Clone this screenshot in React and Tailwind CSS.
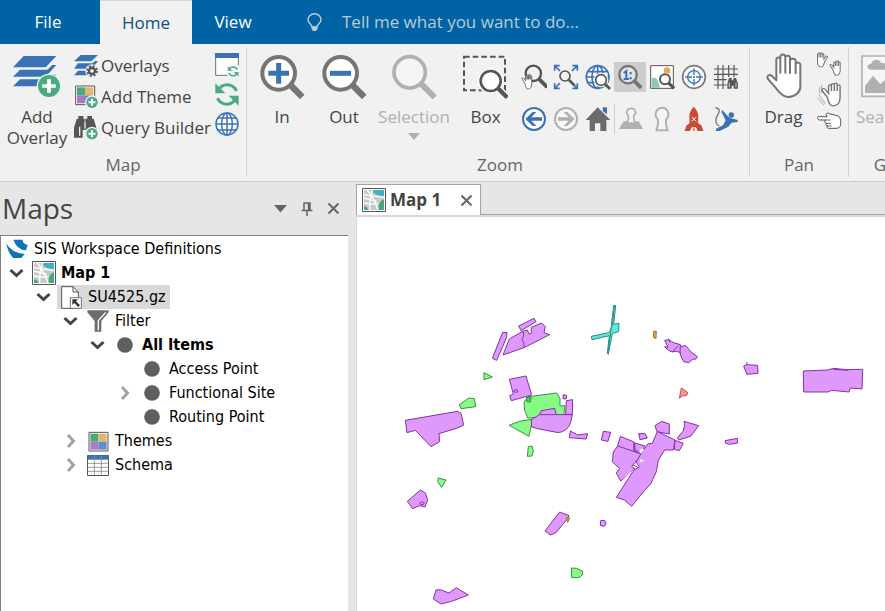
import React from "react";

const BLUE = "#3a73b4";
const GREEN = "#4bab80";
const DARK = "#555555";
const GREY = "#757575";
const PALE = "#b0b0b0";

function Pic({ box, children }) {
  const [x, y, w, h] = box;
  return (
    <svg aria-hidden="true" className="block shrink-0" width={Math.round(w / 3)} height={Math.round(h / 3)} viewBox={`${x} ${y} ${w} ${h}`}>
      {children}
    </svg>
  );
}

function PlusBadge({ x, y, r }) {
  return (
    <g>
      <circle cx={x} cy={y} r={r + 4} fill="#f1f1f1" />
      <circle cx={x} cy={y} r={r} fill={GREEN} />
      <path d={`M${x - r * 0.62} ${y}h${r * 1.24}M${x} ${y - r * 0.62}v${r * 1.24}`} stroke="#fff" strokeWidth={r * 0.34} />
    </g>
  );
}

function Lens({ x, y, r, w, len, color = DARK, fill = "#fff" }) {
  const a = x + r * 0.75;
  const b = y + r * 0.75;
  return (
    <g>
      <path d={`M${a} ${b}l${len} ${len}`} stroke={color} strokeWidth={w * 1.6} />
      <circle cx={x} cy={y} r={r} fill={fill} stroke={color} strokeWidth={w} />
    </g>
  );
}

const ADD_OVERLAY = (
  <Pic box={[42, 171, 144, 129]}>
    <g fill={BLUE}>
      <path d="M74 174H172L140 208H42Z" />
      <path d="M63 215H145L160 201H172L140 236H42Z" />
      <path d="M63 244H145L160 230H172L140 265H42Z" />
    </g>
    <PlusBadge x={150} y={264} r={33} />
  </Pic>
);

const OVERLAYS = (
  <Pic box={[222, 159, 75, 72]}>
    <g fill={BLUE}>
      <path d="M242 162H294L274 181H222Z" />
      <path d="M234 187H277L285 180H294L276 203H222Z" />
      <path d="M234 209H270L262 223H222Z" />
    </g>
    <circle cx="276" cy="210" r="20" fill="#f1f1f1" />
    <circle cx="276" cy="210" r="14" fill="none" stroke={DARK} strokeWidth="7" strokeDasharray="6 5" />
    <circle cx="276" cy="210" r="9" fill="#fff" stroke={DARK} strokeWidth="7" />
  </Pic>
);

const THEME_TILES = (
  <g>
    <path d="M227 254H284V310H227Z" fill="#fff" stroke={DARK} strokeWidth="3" />
    <path d="M231 258H255V282H231Z" fill="#46aa7d" />
    <path d="M255 258H280V282H255Z" fill="#e9b463" />
    <path d="M231 282H255V306H231Z" fill="#a87cc0" />
    <path d="M255 282H280V306H255Z" fill="#5f8cca" />
  </g>
);

const ADD_THEME = (
  <Pic box={[222, 251, 75, 72]}>
    {THEME_TILES}
    <PlusBadge x={276} y={303} r={17} />
  </Pic>
);

const QUERY = (
  <Pic box={[222, 340, 75, 75]}>
    <g fill={DARK}>
      <path d="M235 343H250V351H254V384H248V408H222V378L230 352H235Z" />
      <path d="M262 343H276V351H281L289 378V408H262V384H256V351H262Z" />
      <path d="M246 362H266V384H246Z" />
    </g>
    <path d="M239 375V402M255 362V381" stroke="#f1f1f1" strokeWidth="4" />
    <PlusBadge x={276} y={396} r={17} />
  </Pic>
);

function RefreshShape() {
  return (
    <g>
      <path d="M654 272C666 248 696 248 710 272" fill="none" stroke={GREEN} strokeWidth="9" />
      <path d="M708 294C696 318 666 318 652 294" fill="none" stroke={GREEN} strokeWidth="9" />
      <path d="M646 249V279H676Z" fill={GREEN} />
      <path d="M716 317V287H686Z" fill={GREEN} />
    </g>
  );
}

const WINDOW_REFRESH = (
  <Pic box={[645, 159, 72, 72]}>
    <path d="M647 161H715V226H647Z" fill="#fff" stroke={DARK} strokeWidth="2.5" />
    <path d="M645 159H717V174H645Z" fill={BLUE} />
    <path d="M682 196H717V230H682Z" fill="#f7f7f7" />
    <g transform="translate(386 84) scale(.46)">
      <RefreshShape />
    </g>
  </Pic>
);

const REFRESH = (
  <Pic box={[645, 246, 72, 74]}>
    <RefreshShape />
  </Pic>
);

const GLOBE = (
  <Pic box={[645, 336, 72, 72]}>
    <g fill="none" stroke={BLUE} strokeWidth="4.5">
      <circle cx="681" cy="372" r="33" fill="#fff" />
      <ellipse cx="681" cy="372" rx="16" ry="33" />
      <path d="M681 339V405M648 372H714M654 354H708M654 390H708" />
    </g>
  </Pic>
);

const ZOOM_IN = (
  <Pic box={[48, 42, 135, 135]}>
    <Lens x={104} y={100} r={49} w={12} len={34} color={GREY} />
    <path d="M73 100H135M104 69V131" stroke={BLUE} strokeWidth="15" />
  </Pic>
);

const ZOOM_OUT = (
  <Pic box={[234, 42, 135, 135]}>
    <Lens x={290} y={100} r={49} w={12} len={34} color={GREY} />
    <path d="M258 100H321" stroke={BLUE} strokeWidth="15" />
  </Pic>
);

const ZOOM_SELECTION = (
  <Pic box={[443, 42, 135, 135]}>
    <Lens x={496} y={97} r={47} w={11} len={40} color={PALE} fill="#f4f4f4" />
  </Pic>
);

const ZOOM_BOX = (
  <Pic box={[657, 48, 135, 135]}>
    <path d="M660 56H783V157H660Z" fill="none" stroke={DARK} strokeWidth="6" strokeDasharray="17 9" />
    <circle cx="740" cy="129" r="39" fill="#fafafa" />
    <path d="M762 151L790 179" stroke="#fafafa" strokeWidth="22" />
    <Lens x={740} y={129} r={30} w={8} len={27} />
  </Pic>
);

const HAND =
  "M10 24C7 20 4 15 3 13C2 10 5 9 7 11L12 18V6C12 3 16 3 16 6V14V4C16 1 20 1 20 4V14V3C20 0 24 0 24 3V14V6C24 3 28 3 28 6V25C28 35 24 39 18 39C13 39 12 32 10 24Z";

const ZOOM_GRID = [
  {
    name: "Zoom pan",
    icon: (
      <Pic box={[66, 57, 78, 78]}>
        <Lens x={103} y={85} r={23} w={7} len={24} fill="#f1f1f1" />
        <g transform="translate(66 87) scale(1.15)">
          <path d={HAND} fill="#fff" stroke={DARK} strokeWidth="2.2" />
        </g>
      </Pic>
    ),
  },
  {
    name: "Zoom extent",
    icon: (
      <Pic box={[159, 57, 78, 78]}>
        <g fill="none" stroke={BLUE} strokeWidth="5">
          <path d="M164 77V62H179M164 62L180 78M217 62H232V77M232 62L216 78M164 115V130H179M164 130L180 114M217 130H232V115M232 130L216 114" />
        </g>
        <Lens x={195} y={93} r={15} w={5} len={17} fill="#f4f4f4" />
      </Pic>
    ),
  },
  {
    name: "Zoom world",
    icon: (
      <Pic box={[255, 57, 78, 78]}>
        <g fill="none" stroke={BLUE} strokeWidth="5">
          <circle cx="293" cy="96" r="34" fill="#fff" />
          <ellipse cx="293" cy="96" rx="17" ry="34" />
          <path d="M293 62V130M259 96H327M264 80H322M264 113H322" />
        </g>
        <circle cx="303" cy="105" r="22" fill="#f1f1f1" />
        <Lens x={303} y={105} r={16} w={5} len={15} />
      </Pic>
    ),
  },
  {
    name: "Zoom scale",
    on: true,
    icon: (
      <Pic box={[351, 57, 78, 78]}>
        <Lens x={384} y={89} r={26} w={7} len={20} color={GREY} fill="#e4e4e4" />
        <g stroke={BLUE} strokeWidth="6" fill="none">
          <path d="M371 84L379 78V103M371 102H387" />
          <path d="M392 81V88M392 96V103" />
        </g>
      </Pic>
    ),
  },
  {
    name: "Zoom image",
    icon: (
      <Pic box={[447, 57, 78, 78]}>
        <path d="M452 62H520V130H452Z" fill="#fff" stroke={DARK} strokeWidth="3" />
        <circle cx="501" cy="77" r="10" fill="#e8a94a" />
        <path d="M455 100Q468 95 474 108L480 128H455Z" fill="#8cc9b0" />
        <circle cx="495" cy="103" r="20" fill="#fff" />
        <Lens x={495} y={103} r={15} w={6} len={16} />
      </Pic>
    ),
  },
  {
    name: "Zoom target",
    icon: (
      <Pic box={[543, 57, 78, 78]}>
        <circle cx="582" cy="96" r="34" fill="#fff" stroke="#777" strokeWidth="5" />
        <circle cx="582" cy="96" r="19" fill="none" stroke={BLUE} strokeWidth="4" />
        <path d="M582 70V90M582 102V122M556 96H576M588 96H608" stroke={BLUE} strokeWidth="4" />
        <circle cx="582" cy="96" r="3" fill={BLUE} />
      </Pic>
    ),
  },
  {
    name: "Find grid reference",
    icon: (
      <Pic box={[639, 57, 78, 78]}>
        <path d="M654 60V132M669 60V132M686 60V96M702 60V96M642 72H714M642 88H714M642 104H680M642 120H680" stroke={DARK} strokeWidth="3.5" />
        <path d="M682 131V116L687 99H695V106H700V99H708L714 116V131H701V122H695V131Z" fill={DARK} />
        <path d="M688 113V127M708 113V127" stroke="#f1f1f1" strokeWidth="2.5" />
      </Pic>
    ),
  },
  {
    name: "Previous view",
    icon: (
      <Pic box={[66, 183, 78, 78]}>
        <circle cx="105" cy="222" r="33" fill="#fff" stroke={BLUE} strokeWidth="6" />
        <path d="M79 222L101 201H112L97 217H129V227H97L112 243H101Z" fill={BLUE} />
      </Pic>
    ),
  },
  {
    name: "Next view",
    icon: (
      <Pic box={[159, 183, 78, 78]}>
        <circle cx="198" cy="222" r="33" fill="#f7f7f7" stroke={PALE} strokeWidth="6" />
        <path d="M224 222L202 201H191L206 217H174V227H206L191 243H202Z" fill={PALE} />
      </Pic>
    ),
  },
  {
    name: "Home view",
    icon: (
      <Pic box={[255, 183, 78, 78]}>
        <path d="M308 187H321V208L308 198Z" fill={BLUE} />
        <path d="M293 187L331 225H319V258H301V235H285V258H269V225H257Z" fill="#6b6b6b" />
      </Pic>
    ),
  },
  {
    name: "Place view",
    icon: (
      <Pic box={[363, 183, 78, 78]}>
        <path d="M380 229H425L438 252H366Z" fill={PALE} />
        <path d="M390 234Q396 220 394 212Q387 206 390 198Q395 189 402 190Q411 189 415 198Q418 206 410 212Q409 220 414 234Z" fill="#f5f5f5" stroke={PALE} strokeWidth="5" />
      </Pic>
    ),
  },
  {
    name: "View marker",
    icon: (
      <Pic box={[456, 183, 78, 78]}>
        <path d="M478 256Q486 236 482 222Q473 213 477 201Q483 188 495 188Q508 188 513 201Q517 213 508 222Q504 236 512 256Z" fill="#f5f5f5" stroke={PALE} strokeWidth="6" strokeLinejoin="round" />
      </Pic>
    ),
  },
  {
    name: "Launch",
    icon: (
      <Pic box={[552, 183, 78, 78]}>
        <path d="M590 185Q604 199 604 215L603 234L614 242L619 258H602L597 247H584L579 258H563L568 242L578 234L577 215Q577 199 590 185Z" fill="#cc4934" />
        <path d="M584 216L598 229M598 216L584 229" stroke="#fff" strokeWidth="3" />
        <path d="M588 250H593V258H588Z" fill="#e06b50" />
      </Pic>
    ),
  },
  {
    name: "Jump",
    icon: (
      <Pic box={[648, 183, 78, 78]}>
        <path d="M655 188C679 193 660 207 657 222Q654 237 667 243" fill="none" stroke="#777" strokeWidth="4" />
        <circle cx="703" cy="210" r="8" fill={BLUE} />
        <path d="M676 195L692 213L700 219L722 225V231L704 233L694 245L668 258H657V251L678 241L686 226L673 200Z" fill={BLUE} />
      </Pic>
    ),
  },
];

const DRAG = (
  <Pic box={[78, 39, 108, 138]}>
    <path
      d="M106 142L84 117C79 108 88 101 97 109L109 121V59C109 50 121 50 121 59V98V51C121 41 136 41 136 51V98V53C136 45 150 45 150 53V99V63C150 54 167 54 167 63V100V75C167 65 181 66 181 75V140C181 156 165 171 146 171C128 171 116 156 106 142Z"
      fill="#fff"
      stroke={GREY}
      strokeWidth="6"
      strokeLinejoin="round"
    />
  </Pic>
);

const PAN_ICONS = [
  {
    name: "Pan step",
    icon: (
      <Pic box={[231, 36, 75, 75]}>
        <g fill="#fff" stroke={GREY} strokeWidth="2.6">
          <path transform="translate(266 37) scale(-1.2 1.12)" d={HAND} />
          <path transform="translate(267 62) scale(1.2 1.12)" d={HAND} />
        </g>
      </Pic>
    ),
  },
  {
    name: "Pan glide",
    icon: (
      <Pic box={[231, 125, 75, 75]}>
        <path d="M236 162L256 190M233 172L252 194M239 140V160M245 134V158" stroke="#aaa" strokeWidth="3" />
        <path transform="translate(240 127) scale(2.15 1.78)" d={HAND} fill="#fff" stroke={GREY} strokeWidth="2" />
      </Pic>
    ),
  },
  {
    name: "Pan point",
    icon: (
      <Pic box={[231, 224, 75, 54]}>
        <path
          d="M233 244C230 240 233 238 237 238H262L258 232C258 227 264 226 268 229L291 235Q302 238 302 250V259Q302 273 288 273H266C259 273 259 266 265 266C256 266 255 258 261 258C252 258 252 249 258 248H237Z"
          fill="#fff"
          stroke={DARK}
          strokeWidth="3"
        />
        <path d="M258 248H272M261 258H273M265 266H275" stroke={DARK} strokeWidth="2.5" />
      </Pic>
    ),
  },
];

const SEARCH_IMAGE = (
  <Pic box={[363, 39, 135, 129]}>
    <path d="M366 42H492V163H366Z" fill="#f6f6f6" stroke={PALE} strokeWidth="5" />
    <path d="M392 83C378 81 380 65 393 66C398 50 419 49 424 64C435 60 446 70 442 83Z" fill={PALE} />
    <path d="M375 153V132L399 101L421 127L437 112V153Z" fill={PALE} />
  </Pic>
);

function MapThumb() {
  return (
    <Pic box={[96, 228, 72, 72]}>
      <path d="M97.500 229.500H166.500V298.500H97.500Z" fill="#fff" stroke={DARK} strokeWidth="3" />
      <path d="M102 234H162V294H102Z" fill="#c9c9c9" />
      <path d="M126 234H162V252Q134 252 126 234Z" fill="#3fb0c4" />
      <path d="M162 262V294H146Q143 268 162 262Z" fill="#46aa7d" />
      <path d="M102 282Q112 284 116 294H102Z" fill="#46aa7d" />
      <path d="M102 248Q126 252 162 256M112 234Q134 262 144 294M102 272Q122 280 146 274M119 294Q118 262 128 234M102 258L140 268" fill="none" stroke="#fff" strokeWidth="4" />
    </Pic>
  );
}

const TREE_ICONS = {
  logo: (
    <Pic box={[18, 162, 66, 60]}>
      <path d="M40 164H68Q67 176 83 180L78 196Q50 194 40 164Z" fill="#0d76b8" />
      <path d="M19 175Q32 203 74 207L64 219H40Q24 205 19 175Z" fill="#0d76b8" />
    </Pic>
  ),
  map: <MapThumb />,
  file: (
    <Pic box={[186, 303, 63, 69]}>
      <path d="M188 305H222L238 321V370H188Z" fill="#fff" stroke={DARK} strokeWidth="3" />
      <path d="M222 305V321H238" fill="none" stroke={DARK} strokeWidth="3" />
      <path d="M214 338H247V370H214Z" fill="#fff" stroke={GREY} strokeWidth="3" />
      <path d="M220 343H237L231 349L243 361L238 366L226 354L220 360Z" fill="#333" />
    </Pic>
  ),
  filter: (
    <Pic box={[261, 375, 66, 66]}>
      <path d="M262 376H326V382L304 408V440H284V408L262 382Z" fill="#6d6d6d" />
      <path d="M295 436V407L317 382" fill="none" stroke="#fff" strokeWidth="4" />
    </Pic>
  ),
  dot: (
    <Pic box={[0, 0, 48, 48]}>
      <circle cx="24" cy="24" r="23.500" fill="#5f5f5f" />
    </Pic>
  ),
  themes: (
    <Pic box={[224, 250, 63, 63]}>
      {THEME_TILES}
    </Pic>
  ),
  schema: (
    <Pic box={[261, 372, 66, 63]}>
      <path d="M262.500 373.500H325.500V433.500H262.500Z" fill="#fff" stroke={DARK} strokeWidth="3" />
      <path d="M262 373H326V386H262Z" fill={BLUE} />
      <path d="M283 374V433M304 374V433M262 397H326M262 409H326M262 421H326" stroke="#8a8a8a" strokeWidth="2.500" />
    </Pic>
  ),
};

const TREE = [
  { pad: "pl-[4px]", icon: "logo", label: "SIS Workspace Definitions" },
  { pad: "pl-[4px]", icon: "map", label: "Map 1", bold: true, arrow: "open" },
  { pad: "pl-[31px]", icon: "file", label: "SU4525.gz", arrow: "open", selected: true },
  { pad: "pl-[58px]", icon: "filter", label: "Filter", arrow: "open" },
  { pad: "pl-[85px]", icon: "dot", label: "All Items", bold: true, arrow: "open" },
  { pad: "pl-[112px]", icon: "dot", label: "Access Point", arrow: "none" },
  { pad: "pl-[112px]", icon: "dot", label: "Functional Site", arrow: "closed" },
  { pad: "pl-[112px]", icon: "dot", label: "Routing Point", arrow: "none" },
  { pad: "pl-[58px]", icon: "themes", label: "Themes", arrow: "closed" },
  { pad: "pl-[58px]", icon: "schema", label: "Schema", arrow: "closed" },
];

function TreeRow({ row }) {
  const open = row.arrow === "open";
  return (
    <li className={`flex h-6 items-center ${row.pad}`}>
      {row.arrow && (
        <span className="w-[27px] shrink-0 pl-1">
          {row.arrow !== "none" && (
            <button type="button" aria-label={`${open ? "Collapse" : "Expand"} ${row.label}`} className="block">
              <svg width="15" height="16" viewBox="0 0 15 16" fill="none" strokeWidth="3">
                {open ? <path d="M1.500 5L7.500 10.500L13.500 5" stroke="#444" /> : <path d="M5 2L10.500 8L5 14" stroke="#a3a3a3" />}
              </svg>
            </button>
          )}
        </span>
      )}
      <span className={`-ml-0.5 flex h-6 items-center gap-[5px] pr-1 pl-0.5 ${row.selected ? "bg-[#d9d9d9]" : ""}`}>
        <span className="flex w-6 justify-center">{TREE_ICONS[row.icon]}</span>
        <span className={row.bold ? "font-bold" : ""}>{row.label}</span>
      </span>
    </li>
  );
}

function Group({ title, className = "", children }) {
  return (
    <section aria-label={title} className={`flex shrink-0 flex-col ${className}`}>
      <div className="flex h-[106px] items-start">{children}</div>
      <h2 className="text-center text-[17px] leading-6 text-[#666]">{title}</h2>
    </section>
  );
}

function BigButton({ icon, width, disabled, children }) {
  return (
    <button type="button" disabled={disabled} className={`flex shrink-0 flex-col items-center gap-[5px] pt-1 ${width} ${disabled ? "text-[#b0b0b0]" : "text-[#444]"}`}>
      <span className="flex h-[50px] items-center">{icon}</span>
      <span className="leading-[21px]">{children}</span>
    </button>
  );
}

function MapShapes() {
  return (
    <svg role="img" aria-label="Map of functional sites" className="block shrink-0" width="528" height="394" viewBox="357 217 528 394">
      <g strokeWidth="3" strokeLinejoin="round" fill="#df99fc" stroke="#8232a4">
        <g transform="translate(390 290) scale(.33333)">
          <path d="M386 108L432 85L438 95L393 122Z" />
          <path d="M338 127L351 128L350 142L320 211L307 205Z" />
          <path d="M358 147L398 124L412 120L417 132L424 130L424 112L455 99L466 110L462 128L479 134L402 173L339 195Z" />
          <path d="M398 124Q406 135 396 148Q404 158 402 173" fill="none" />
          <path d="M358 268L408 258L425 315L364 332L359 317L370 312Z" />
          <ellipse cx="378" cy="303" rx="6" ry="4" />
          <path d="M46 391L203 364L213 370L221 405L205 413L147 431L149 455L123 470L76 421L51 428Z" />
          <path d="M402 337L414 320L500 309L510 325V348L525 347L521 377L413 384L404 361Z" fill="#86fc86" stroke="#438c49" />
          <path d="M410 321L424 323L420 337L410 334Z" fill="#50c95a" stroke="#3b8d42" />
          <path d="M357 406L388 394L428 387L417 439Z" fill="#86fc86" stroke="#438c49" />
          <path d="M208 344L237 324L253 326L257 350L213 356Z" fill="#86fc86" stroke="#438c49" />
          <path d="M282 248L307 261L282 269Z" fill="#86fc86" stroke="#438c49" />
          <path d="M415 470L426 468L430 483L426 498L412 499Z" fill="#86fc86" stroke="#438c49" />
          <path d="M424 389L448 374L454 362L494 355L499 374H547L542 397Q534 424 505 428L443 416L425 411Z" />
          <path d="M448 374H500" />
          <path d="M529 332L548 329L547 373H527ZM520 314L530 316L528 327L519 326Z" />
          <path d="M541 423L563 435L593 431L588 447L538 443Z" />
          <path d="M640 424L662 427L654 454L634 450Z" />
          <g fill="#62e9dc" stroke="#278c82">
            <path d="M674 45L677 47L671 103L687 100L686 125L667 130L655 193L652 190L658 137L606 149L604 139L657 128L666 110Z" />
            <path d="M671 45L662 128L653 191" />
          </g>
        </g>
        <g transform="translate(590 290) scale(.33333)">
          <path d="M191 124H199L198 145L191 143Z" fill="#e8aa48" stroke="#a46a25" />
          <path d="M224 151L238 149L245 156L271 164L275 170L286 166L297 178L303 186L322 200L318 207L308 208L296 218L281 215L271 195V187L256 184L247 186L235 181L224 170L234 172Z" />
          <path d="M271 165L270 190M236 146L240 157M265 168L247 186" />
          <path d="M461 228L470 224L503 226L504 250L471 253Z" />
          <path d="M470 216L472 225" />
          <path d="M640 243L713 240L730 235L770 239L818 238L816 297L781 294L777 306L725 301L714 306H641Z" />
          <path d="M730 238L775 241" />
          <path d="M274 294L285 301L294 309L289 317L277 318L268 325Z" fill="#fc9292" stroke="#b55a55" />
          <path d="M405 452L442 445L443 459L419 463L407 460Z" />
          <path d="M195 407L215 394L238 402V432L201 425Z" />
          <path d="M282 394L326 407L303 438L267 450L262 444L279 424L284 407Z" />
          <path d="M146 431L165 431L172 444L150 449Z" />
          <path d="M91 439L132 456L132 482L157 493L125 529L135 537L92 573L79 549L89 535L67 516L70 486L83 468Z" />
          <path d="M83 468L157 493M133 458L132 482" />
          <path d="M134 459L165 468L155 483L135 483Z" />
          <path d="M202 425L255 450L250 480H224L205 511L199 545L182 582L163 602L125 649L103 630L79 622L131 541L148 530L138 517L153 491L173 462L187 460Z" />
          <path d="M255 451L280 460L268 482L253 478Z" />
          <path d="M148 481L158 474L162 481L151 491ZM151 506L162 513L151 517ZM118 548L134 540L97 569Z" fill="#fff" stroke="none" />
          <path d="M129 524L140 530L146 534" />
        </g>
        <g transform="translate(390 460) scale(.33333)">
          <path d="M52 124L91 90L106 99L113 119L105 141L89 137L68 146Z" />
          <ellipse cx="96" cy="130" rx="6" ry="4" />
          <path d="M145 54L168 60L155 82L143 65Z" fill="#86fc86" stroke="#438c49" />
          <path d="M509 156L537 167L530 179L498 218L481 225L465 213Z" />
          <path d="M529 172L539 174L533 187Z" fill="#e8aa48" stroke="#a46a25" />
          <path d="M632 182L644 181L648 190L643 199L631 196Z" />
          <path d="M544 324L560 325L578 334L577 345L567 353H545Z" fill="#86fc86" stroke="#438c49" />
          <path d="M138 390L151 389L177 399L199 383L235 405L185 424L153 432L130 417Z" />
        </g>
      </g>
    </svg>
  );
}

const CloseMark = () => (
  <svg width="13" height="13" viewBox="0 0 13 13" className="block" stroke="#666" strokeWidth="2">
    <path d="M1.500 1.500L11.500 11.500M11.500 1.500L1.500 11.500" />
  </svg>
);

export default function App() {
  return (
    <div className="flex h-screen flex-col overflow-hidden bg-[#e6e6e6] font-['Open_Sans','Noto_Sans',sans-serif] text-[17px] text-[#444]">
      <header className="flex h-11 shrink-0 bg-[#0063a3] text-white">
        <nav aria-label="Ribbon tabs" className="flex">
          <button type="button" className="w-[100px] pr-1">File</button>
          <button type="button" className="w-[92px] border-t border-[#d5d5d5] bg-[#f1f1f1] text-[#0a5085]">Home</button>
          <button type="button" className="w-[82px]">View</button>
        </nav>
        <label className="flex flex-1 items-center gap-5 pl-[33px]">
          <svg width="15" height="19" viewBox="0 0 15 19" fill="none" stroke="#b9cbd9" strokeWidth="1.500" aria-hidden="true">
            <path d="M5 14C5 11 1 10.500 1 6.800A6.500 6 0 0 1 14 6.800C14 10.500 10 11 10 14Z" />
            <path d="M4.500 13.500H10.500V16L9 18H6L4.500 16Z" fill="#b9cbd9" stroke="none" />
          </svg>
          <input aria-label="Tell me what you want to do" placeholder="Tell me what you want to do..." className="min-w-0 flex-1 bg-transparent outline-none placeholder:text-[#b9cbd9]" />
        </label>
      </header>

      <div className="flex shrink-0 overflow-hidden border-b border-[#cfcfcf] bg-[#f1f1f1] pt-[3px] pb-1">
        <Group title="Map" className="w-[247px] border-r border-[#d2d2d2]">
          <BigButton icon={ADD_OVERLAY} width="w-[74px]">
            Add
            <br />
            Overlay
          </BigButton>
          <div className="flex w-[141px] flex-col pt-[3px]">
            {[[OVERLAYS, "Overlays"], [ADD_THEME, "Add Theme"], [QUERY, "Query Builder"]].map(([icon, name]) => (
              <button key={name} type="button" className="flex h-[31px] items-center gap-0.5 whitespace-nowrap">
                {icon}
                {name}
              </button>
            ))}
          </div>
          <div className="flex flex-col gap-[5px] pt-[6px]">
            <button type="button" aria-label="New window">{WINDOW_REFRESH}</button>
            <button type="button" aria-label="Refresh">{REFRESH}</button>
            <button type="button" aria-label="Globe">{GLOBE}</button>
          </div>
        </Group>

        <Group title="Zoom" className="w-[503px] border-r border-[#d2d2d2] pl-1">
          <BigButton icon={ZOOM_IN} width="w-[62px]">In</BigButton>
          <BigButton icon={ZOOM_OUT} width="w-[62px]">Out</BigButton>
          <BigButton icon={ZOOM_SELECTION} width="w-[78px]" disabled>
            Selection
            <svg width="12" height="7" viewBox="0 0 12 7" className="mx-auto mt-1.5 block">
              <path d="M0 0H12L6 7Z" fill="#b0b0b0" />
            </svg>
          </BigButton>
          <BigButton icon={ZOOM_BOX} width="w-[65px]">Box</BigButton>
          <div className="grid grid-cols-7 gap-y-3 pt-[15px]">
            {ZOOM_GRID.map((item) => (
              <button
                key={item.name}
                type="button"
                aria-label={item.name}
                className={`flex h-[30px] w-8 items-center justify-center ${item.on ? "bg-[#cdcdcd]" : ""} ${item.name === "Place view" ? "border-l border-[#cfcfcf]" : ""}`}
              >
                {item.icon}
              </button>
            ))}
          </div>
        </Group>

        <Group title="Pan" className="w-[99px] border-r border-[#d2d2d2]">
          <BigButton icon={DRAG} width="w-[67px]">Drag</BigButton>
          <div className="flex flex-col gap-[5px] pt-[5px]">
            {PAN_ICONS.map((item) => (
              <button key={item.name} type="button" aria-label={item.name}>{item.icon}</button>
            ))}
          </div>
        </Group>

        <Group title="G" className="w-[62px]">
          <button type="button" disabled className="flex flex-col items-start gap-[5px] pt-1 pl-[7px] text-[#b0b0b0]">
            <span className="flex h-[50px] items-center pl-[5px]">{SEARCH_IMAGE}</span>
            <span className="leading-[21px]">Sea</span>
          </button>
        </Group>
      </div>

      <div className="flex min-h-0 flex-1">
        <aside className="flex w-[348px] shrink-0 flex-col">
          <div className="flex h-[53px] shrink-0 items-center pr-2 pl-[2px]">
            <h1 className="flex-1 pb-0.5 text-[28px]">Maps</h1>
            <div className="flex items-center gap-[14px]">
              <button type="button" aria-label="Panel menu">
                <svg width="13" height="8" viewBox="0 0 13 8" className="block"><path d="M0 0H13L6.500 7.500Z" fill="#666" /></svg>
              </button>
              <button type="button" aria-label="Pin panel">
                <svg width="12" height="14" viewBox="0 0 12 14" className="block" fill="none" stroke="#666" strokeWidth="1.500">
                  <path d="M3 8V1H9V8M7.500 1V8M0.500 8.500H11.500M6 9V14" />
                </svg>
              </button>
              <button type="button" aria-label="Close panel"><CloseMark /></button>
            </div>
          </div>
          <ul className="flex-1 border-t border-l border-[#808080] bg-white pt-px font-['DejaVu_Sans_Condensed','Noto_Sans',sans-serif] text-[16px] whitespace-nowrap text-black">
            {TREE.map((row) => <TreeRow key={row.label} row={row} />)}
          </ul>
        </aside>

        <main className="flex min-w-0 flex-1 flex-col pl-2">
          <div className="flex h-[33px] shrink-0 items-end border-b border-[#a5a5a5]">
            <div className="-mb-px flex h-[31px] w-[125px] items-center gap-1 border border-b-0 border-[#a5a5a5] bg-white pl-[5px] font-bold">
              <MapThumb />
              <span className="flex-1">Map 1</span>
              <button type="button" aria-label="Close Map 1" className="pr-[7px]"><CloseMark /></button>
            </div>
          </div>
          <div className="flex-1 overflow-hidden border-t-2 border-l border-[#d8d8d8] bg-white">
            <MapShapes />
          </div>
        </main>
      </div>
    </div>
  );
}
